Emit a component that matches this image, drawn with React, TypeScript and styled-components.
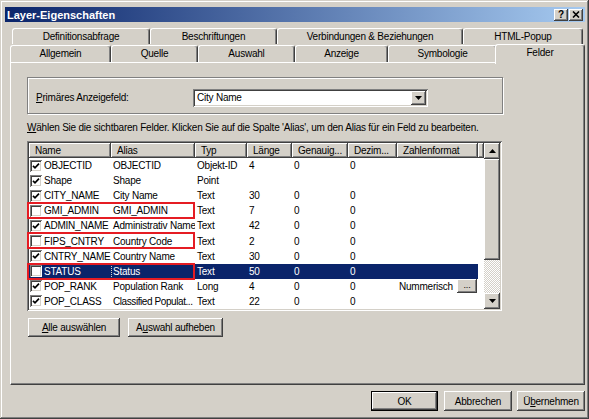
import React from 'react';
import styled, { createGlobalStyle, css } from 'styled-components';

const GlobalStyle = createGlobalStyle`
  html, body { margin: 0; padding: 0; background: #ffffff; }
  body { font-family: "Liberation Sans", Arial, sans-serif; font-size: 10px; letter-spacing: -0.22px; color: #000; }
  * { box-sizing: border-box; }
`;

const FACE = '#d4d0c8';
const NAVY = '#0a246a';

const raised = css`
  box-shadow: inset -1px -1px #404040, inset 1px 1px #ffffff, inset -2px -2px #808080, inset 2px 2px ${FACE};
`;
const sunken = css`
  box-shadow: inset 1px 1px #808080, inset -1px -1px #ffffff, inset 2px 2px #404040, inset -2px -2px ${FACE};
`;

const Window = styled.div`
  width: 589px;
  height: 419px;
  background: ${FACE};
  padding: 4px;
  display: flex;
  flex-direction: column;
  box-shadow: inset -1px -1px #404040, inset 1px 1px ${FACE}, inset -2px -2px #808080, inset 2px 2px #ffffff;
`;

const TitleBar = styled.div`
  height: 15px;
  margin-top: 3px;
  margin-left: 1px;
  display: flex;
  align-items: center;
  padding: 0 2px 0 2px;
  background: linear-gradient(to right, ${NAVY}, #a6caf0);
`;

const TitleText = styled.span`
  color: #fff;
  font-weight: bold;
  font-size: 11px;
  letter-spacing: 0;
  flex: 1;
`;

const TitleButton = styled.div`
  width: 14px;
  height: 12px;
  background: ${FACE};
  ${raised};
  display: flex;
  align-items: center;
  justify-content: center;
  font-weight: bold;
  font-size: 10px;
  line-height: 1;
  & + & { margin-left: 1px; }
`;

const Body = styled.div`
  padding-left: 6px;
  display: flex;
  flex-direction: column;
`;

const TabStrip = styled.div`
  margin-top: 6px;
  display: flex;
  flex-direction: column;
`;

const TabRow = styled.div<{ $indent: number }>`
  display: flex;
  align-items: flex-end;
  padding-left: ${p => p.$indent}px;
  position: relative;
`;

const Tab = styled.div<{ $w: number; $h: number; $selected?: boolean }>`
  width: ${p => p.$w}px;
  height: ${p => p.$h}px;
  background: ${FACE};
  border-top: 1px solid #fff;
  border-left: 1px solid #fff;
  border-right: 1px solid #404040;
  border-radius: 3px 3px 0 0;
  box-shadow: inset -1px 0 #808080;
  display: flex;
  justify-content: center;
  padding-top: 2px;
  white-space: nowrap;
  ${p =>
    p.$selected &&
    css`
      margin-left: -2px;
      margin-bottom: -2px;
      position: relative;
      z-index: 2;
    `}
`;

const Panel = styled.div`
  height: 323px;
  background: ${FACE};
  border: 1px solid;
  border-color: #ffffff #404040 #404040 #ffffff;
  box-shadow: inset -1px -1px #808080;
  padding: 14px 0 0 16px;
  display: flex;
  flex-direction: column;
  position: relative;
  z-index: 1;
`;

const GroupBox = styled.div`
  width: 476px;
  height: 37px;
  border: 1px solid #808080;
  box-shadow: inset 1px 1px #ffffff, 1px 1px #ffffff;
  display: flex;
  align-items: center;
  padding: 4px 0 0 8px;
`;

const FieldLabel = styled.span`
  width: 157px;
`;

const Combo = styled.div`
  width: 235px;
  height: 18px;
  background: #fff;
  ${sunken};
  padding: 2px;
  display: flex;
  align-items: center;
`;

const ComboText = styled.span`
  flex: 1;
  padding-left: 2px;
`;

const ArrowButton = styled.div<{ $w?: number; $h?: number }>`
  width: ${p => p.$w ?? 16}px;
  height: ${p => p.$h ?? 16}px;
  background: ${FACE};
  ${raised};
  display: flex;
  align-items: center;
  justify-content: center;
  flex: none;
`;

const Instruction = styled.div`
  margin-top: 8px;
  line-height: 12px;
  white-space: nowrap;
`;

const ListView = styled.div`
  margin-top: 7px;
  width: 475px;
  height: 170px;
  background: #fff;
  ${sunken};
  padding: 2px;
  display: flex;
`;

const ListArea = styled.div`
  flex: 1;
  display: flex;
  flex-direction: column;
`;

const HeaderRow = styled.div`
  height: 15px;
  display: flex;
  flex: none;
`;

const HeaderCell = styled.div<{ $w?: number }>`
  ${p => (p.$w ? css`width: ${p.$w}px; flex: none;` : css`flex: 1;`)}
  height: 15px;
  background: ${FACE};
  ${raised};
  padding-left: 6px;
  display: flex;
  align-items: center;
  white-space: nowrap;
  overflow: hidden;
`;

const Row = styled.div`
  height: 15.1px;
  display: flex;
  flex: none;
  position: relative;
`;

const Cell = styled.div<{ $w?: number; $selected?: boolean; $focus?: boolean; $tight?: boolean }>`
  ${p => (p.$w ? css`width: ${p.$w}px; flex: none;` : css`flex: 1;`)}
  display: flex;
  align-items: center;
  padding-left: 2px;
  white-space: nowrap;
  overflow: hidden;
  letter-spacing: ${p => (p.$tight ? '-0.42px' : 'inherit')};
  background: ${p => (p.$selected ? NAVY : 'transparent')};
  color: ${p => (p.$selected ? '#fff' : '#000')};
  ${p =>
    p.$focus &&
    css`
      outline: 1px dotted #d4d0c8;
      outline-offset: -1px;
    `}
`;

const CheckBox = styled.span`
  width: 12px;
  height: 12px;
  flex: none;
  background: #fff;
  ${sunken};
  display: flex;
  align-items: center;
  justify-content: center;
  margin: 0 2px 0 -1px;
`;

const Marker = styled.div`
  position: absolute;
  left: -2px;
  top: -1px;
  width: 168px;
  height: 17px;
  border: 2px solid #e51c23;
  pointer-events: none;
  z-index: 3;
`;

const MiniButton = styled.div`
  margin-left: auto;
  margin-right: 1px;
  width: 20px;
  height: 14px;
  background: ${FACE};
  ${raised};
  display: flex;
  align-items: center;
  justify-content: center;
  font-size: 9px;
  padding-bottom: 3px;
  color: #000;
`;

const ScrollBar = styled.div`
  width: 16px;
  flex: none;
  display: flex;
  flex-direction: column;
`;

const Thumb = styled.div`
  height: 101px;
  background: ${FACE};
  ${raised};
`;

const Track = styled.div`
  flex: 1;
  background-color: #fff;
  background-image: repeating-conic-gradient(${FACE} 0 25%, #ffffff 0 50%);
  background-size: 2px 2px;
`;

const ButtonRow = styled.div<{ $end?: boolean }>`
  display: flex;
  gap: ${p => (p.$end ? 6 : 8)}px;
  justify-content: ${p => (p.$end ? 'flex-end' : 'flex-start')};
  margin-top: ${p => (p.$end ? 6 : 7)}px;
  margin-left: ${p => (p.$end ? 0 : 1)}px;
`;

const PushButton = styled.div<{ $w: number; $h: number; $default?: boolean }>`
  width: ${p => p.$w}px;
  height: ${p => p.$h}px;
  background: ${FACE};
  display: flex;
  align-items: center;
  justify-content: center;
  white-space: nowrap;
  ${p =>
    p.$default
      ? css`
          box-shadow: inset 0 0 0 1px #000, inset -2px -2px #404040, inset 2px 2px #ffffff, inset -3px -3px #808080;
        `
      : raised};
`;

const Key = styled.span`
  text-decoration: underline;
`;

const Up = () => (
  <svg width="7" height="4" viewBox="0 0 7 4"><polygon points="3.5,0 7,4 0,4" fill="#000" /></svg>
);
const Down = () => (
  <svg width="7" height="4" viewBox="0 0 7 4"><polygon points="0,0 7,0 3.5,4" fill="#000" /></svg>
);
const Tick = () => (
  <svg width="8" height="8" viewBox="0 0 8 8">
    <polyline points="1,3.8 3,5.8 7,1.6" fill="none" stroke="#000" strokeWidth="1.7" />
  </svg>
);
const CloseGlyph = () => (
  <svg width="8" height="7" viewBox="0 0 8 7">
    <path d="M1 0.5 L7 6.5 M7 0.5 L1 6.5" stroke="#000" strokeWidth="1.6" />
  </svg>
);

const columns = [
  { key: 'name', title: 'Name', w: 82 },
  { key: 'alias', title: 'Alias', w: 84 },
  { key: 'typ', title: 'Typ', w: 52 },
  { key: 'len', title: 'Länge', w: 45 },
  { key: 'gen', title: 'Genauig...', w: 56 },
  { key: 'dez', title: 'Dezim...', w: 49 },
  { key: 'fmt', title: 'Zahlenformat', w: 81 },
] as const;

type RowData = {
  checked: boolean;
  name: string;
  alias: string;
  typ: string;
  len: string;
  gen: string;
  dez: string;
  fmt?: string;
  button?: boolean;
  marked?: boolean;
  selected?: boolean;
  tight?: boolean;
};

const rows: RowData[] = [
  { checked: true, name: 'OBJECTID', alias: 'OBJECTID', typ: 'Objekt-ID', len: '4', gen: '0', dez: '0' },
  { checked: true, name: 'Shape', alias: 'Shape', typ: 'Point', len: '', gen: '', dez: '' },
  { checked: true, name: 'CITY_NAME', alias: 'City Name', typ: 'Text', len: '30', gen: '0', dez: '0' },
  { checked: false, name: 'GMI_ADMIN', alias: 'GMI_ADMIN', typ: 'Text', len: '7', gen: '0', dez: '0', marked: true },
  { checked: true, name: 'ADMIN_NAME', alias: 'Administrativ Name', typ: 'Text', len: '42', gen: '0', dez: '0' },
  { checked: false, name: 'FIPS_CNTRY', alias: 'Country Code', typ: 'Text', len: '2', gen: '0', dez: '0', marked: true },
  { checked: true, name: 'CNTRY_NAME', alias: 'Country Name', typ: 'Text', len: '30', gen: '0', dez: '0' },
  { checked: false, name: 'STATUS', alias: 'Status', typ: 'Text', len: '50', gen: '0', dez: '0', marked: true, selected: true },
  { checked: true, name: 'POP_RANK', alias: 'Population Rank', typ: 'Long', len: '4', gen: '0', dez: '0', fmt: 'Nummerisch', button: true },
  { checked: true, name: 'POP_CLASS', alias: 'Classified Populat...', typ: 'Text', len: '22', gen: '0', dez: '0', tight: true },
];

const backTabs = [
  { label: 'Definitionsabfrage', w: 138 },
  { label: 'Beschriftungen', w: 127 },
  { label: 'Verbindungen & Beziehungen', w: 186 },
  { label: 'HTML-Popup', w: 120 },
];

const frontTabs = [
  { label: 'Allgemein', w: 101 },
  { label: 'Quelle', w: 87 },
  { label: 'Auswahl', w: 97 },
  { label: 'Anzeige', w: 93 },
  { label: 'Symbologie', w: 109 },
  { label: 'Felder', w: 90, selected: true },
];

export default function App() {
  return (
    <>
      <GlobalStyle />
      <Window>
        <TitleBar>
          <TitleText>Layer-Eigenschaften</TitleText>
          <TitleButton>?</TitleButton>
          <TitleButton>
            <CloseGlyph />
          </TitleButton>
        </TitleBar>
        <Body>
          <TabStrip>
            <TabRow $indent={2}>
              {backTabs.map(t => (
                <Tab key={t.label} $w={t.w} $h={16}>
                  {t.label}
                </Tab>
              ))}
            </TabRow>
            <TabRow $indent={0}>
              {frontTabs.map(t => (
                <Tab key={t.label} $w={t.w} $h={t.selected ? 20 : 17} $selected={t.selected}>
                  {t.label}
                </Tab>
              ))}
            </TabRow>
          </TabStrip>
          <Panel>
            <GroupBox>
              <FieldLabel>
                <Key>P</Key>rimäres Anzeigefeld:
              </FieldLabel>
              <Combo>
                <ComboText>City Name</ComboText>
                <ArrowButton $w={15} $h={14}>
                  <Down />
                </ArrowButton>
              </Combo>
            </GroupBox>
            <Instruction>
              <Key>W</Key>ählen Sie die sichtbaren Felder. Klicken Sie auf die Spalte 'Alias', um den Alias für ein Feld zu bearbeiten.
            </Instruction>
            <ListView>
              <ListArea>
                <HeaderRow>
                  {columns.map(c => (
                    <HeaderCell key={c.key} $w={c.w}>
                      {c.title}
                    </HeaderCell>
                  ))}
                  <HeaderCell />
                </HeaderRow>
                {rows.map(r => (
                  <Row key={r.name}>
                    <Cell $w={82} $selected={r.selected}>
                      <CheckBox>{r.checked && <Tick />}</CheckBox>
                      {r.name}
                    </Cell>
                    <Cell $w={84} $selected={r.selected} $focus={r.selected} $tight={r.tight}>
                      {r.alias}
                    </Cell>
                    <Cell $w={52} $selected={r.selected}>{r.typ}</Cell>
                    <Cell $w={45} $selected={r.selected}>{r.len}</Cell>
                    <Cell $w={56} $selected={r.selected}>{r.gen}</Cell>
                    <Cell $w={49} $selected={r.selected}>{r.dez}</Cell>
                    <Cell $w={81} $selected={r.selected}>
                      {r.fmt}
                      {r.button && <MiniButton>...</MiniButton>}
                    </Cell>
                    <Cell />
                    {r.marked && <Marker />}
                  </Row>
                ))}
              </ListArea>
              <ScrollBar>
                <ArrowButton>
                  <Up />
                </ArrowButton>
                <Thumb />
                <Track />
                <ArrowButton>
                  <Down />
                </ArrowButton>
              </ScrollBar>
            </ListView>
            <ButtonRow>
              <PushButton $w={92} $h={19}>
                <Key>A</Key>lle auswählen
              </PushButton>
              <PushButton $w={95} $h={19}>
                A<Key>u</Key>swahl aufheben
              </PushButton>
            </ButtonRow>
          </Panel>
          <ButtonRow $end>
            <PushButton $w={67} $h={20} $default>
              OK
            </PushButton>
            <PushButton $w={68} $h={20}>
              Abbrechen
            </PushButton>
            <PushButton $w={68} $h={20} style={{ marginLeft: -1 }}>
              Ü<Key>b</Key>ernehmen
            </PushButton>
          </ButtonRow>
        </Body>
      </Window>
    </>
  );
}
